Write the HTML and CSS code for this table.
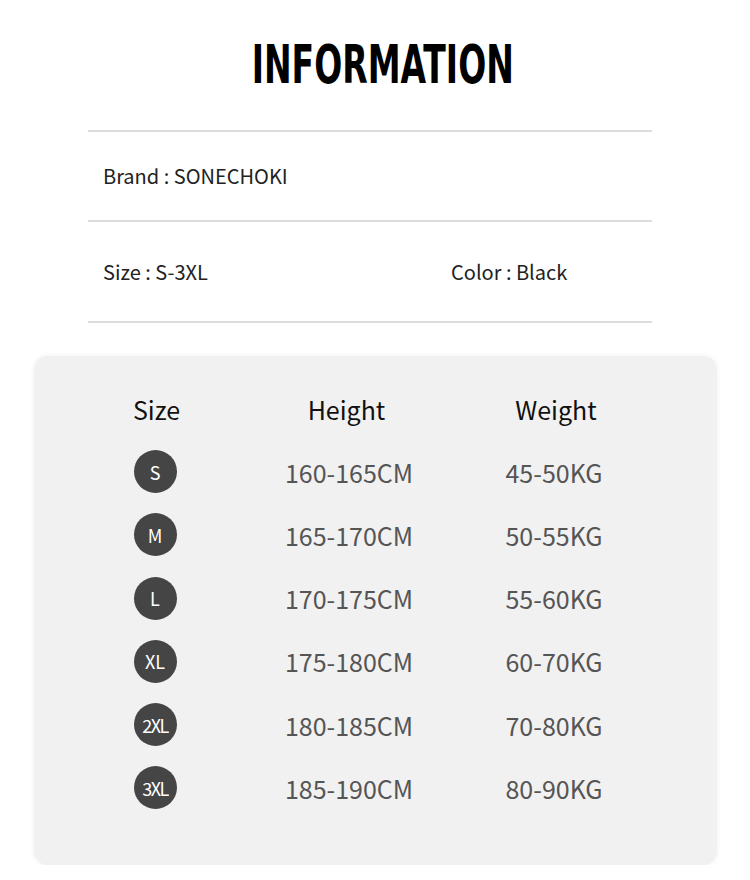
FILE: index.html
```html
<!DOCTYPE html>
<html>
<head>
<meta charset="utf-8">
<link rel="stylesheet" href="styles.css">
</head>
<body>
<h1 class="title"><span class="title-text">INFORMATION</span></h1>
<div class="info">
  <div class="info-row row-brand"><span>Brand : SONECHOKI</span></div>
  <div class="info-row row-size"><span class="info-size">Size : S-3XL</span><span class="info-color">Color : Black</span></div>
</div>
<div class="chart">
  <div class="grid">
    <div class="head head-size">Size</div><div class="head head-height">Height</div><div class="head head-weight">Weight</div>
    <div class="cell"><span class="badge">S</span></div><div class="val">160-165CM</div><div class="val">45-50KG</div>
    <div class="cell"><span class="badge">M</span></div><div class="val">165-170CM</div><div class="val">50-55KG</div>
    <div class="cell"><span class="badge">L</span></div><div class="val">170-175CM</div><div class="val">55-60KG</div>
    <div class="cell"><span class="badge">XL</span></div><div class="val">175-180CM</div><div class="val">60-70KG</div>
    <div class="cell"><span class="badge badge-tight">2XL</span></div><div class="val">180-185CM</div><div class="val">70-80KG</div>
    <div class="cell"><span class="badge badge-tight">3XL</span></div><div class="val">185-190CM</div><div class="val">80-90KG</div>
  </div>
</div>
</body>
</html>
```
FILE: styles.css
```css
html, body {
  margin: 0;
  padding: 0;
  background: #ffffff;
}
body {
  width: 750px;
  font-family: "Noto Sans CJK SC", "Noto Sans", sans-serif;
}
.title {
  margin: 38px 0 0 0;
  height: 54px;
  text-align: center;
  font-family: "Liberation Sans Narrow", "DejaVu Sans Condensed", "Liberation Sans", sans-serif;
  font-weight: 700;
  font-size: 54px;
  line-height: 54px;
  color: #000;
}
.title-text {
  display: inline-block;
  transform: scaleX(0.68);
  transform-origin: center;
  margin-left: 16px;
}
.info {
  margin: 38px 98px 0 88px;
  border-bottom: 2px solid #dcdcdc;
}
.info-row {
  display: flex;
  align-items: center;
  border-top: 2px solid #dcdcdc;
  padding-left: 15px;
  font-size: 20px;
  line-height: 28px;
  color: #222;
}
.row-brand {
  height: 88px;
}
.row-size {
  height: 99px;
}
.info-size {
  width: 348px;
}
.chart {
  margin: 33px 0 0 34px;
  width: 683px;
  height: 509px;
  box-sizing: border-box;
  padding-top: 21px;
  padding-left: 71px;
  background: #f1f1f1;
  border-radius: 14px;
  box-shadow: 0 0 5px 1px #f4f4f4;
}
.grid {
  display: grid;
  grid-template-columns: 100px 288px 122px;
  grid-auto-rows: 63.2px;
  justify-items: center;
  align-items: center;
}
.head {
  font-size: 25px;
  line-height: 30px;
  color: #111;
}
.head-size {
  margin-left: 3px;
}
.head-height {
  margin-right: 5px;
}
.head-weight {
  margin-left: 4px;
}
.val {
  font-size: 25px;
  line-height: 30px;
  color: #555;
}
.cell {
  display: flex;
  align-items: center;
  justify-content: center;
}
.badge {
  width: 43px;
  height: 43px;
  border-radius: 50%;
  background: #454545;
  color: #fff;
  display: flex;
  align-items: center;
  justify-content: center;
  font-size: 18px;
  line-height: 20px;
}
.badge-tight {
  letter-spacing: -1.5px;
}
```
